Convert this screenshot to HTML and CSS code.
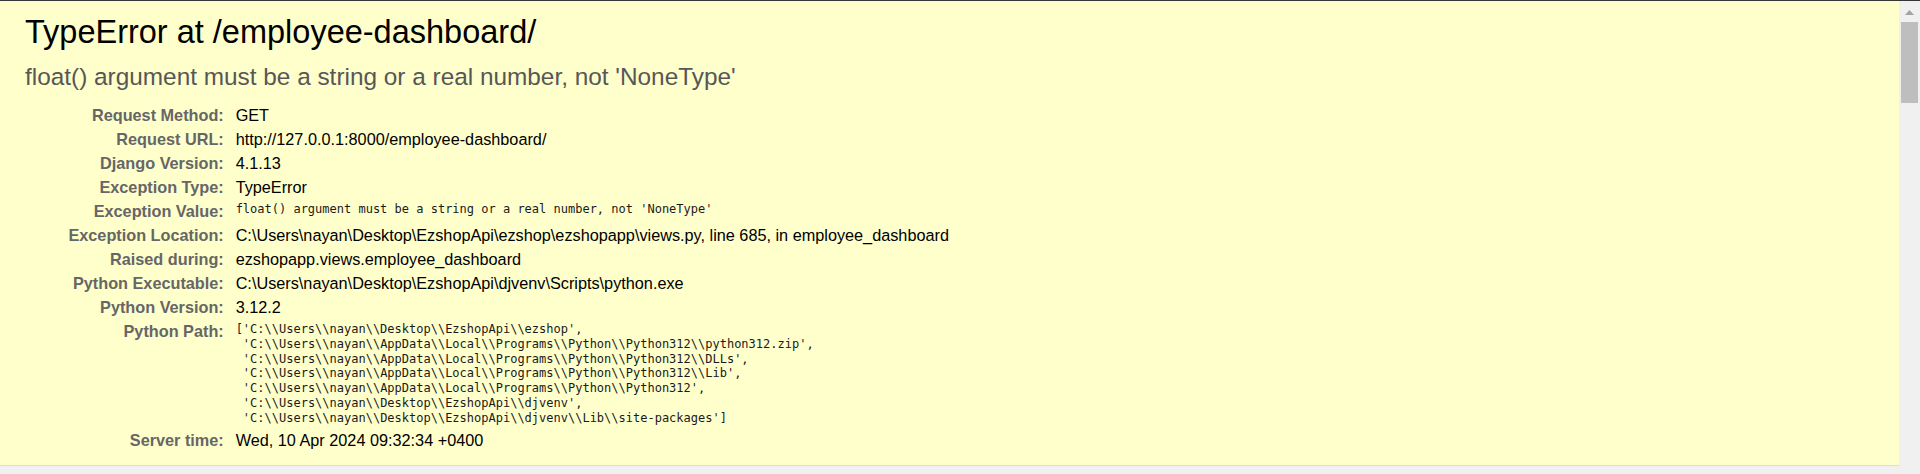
FILE: index.html
```html
<!DOCTYPE html>
<html lang="en">
<head>
<meta charset="utf-8">
<title>TypeError at /employee-dashboard/</title>
<link rel="stylesheet" href="styles.css">
</head>
<body>
<div class="window">
  <div class="page">
    <div id="summary">
      <h1>TypeError at /employee-dashboard/</h1>
      <pre class="exception_value">float() argument must be a string or a real number, not 'NoneType'</pre>
      <table class="meta">
        <tr><th>Request Method:</th><td>GET</td></tr>
        <tr><th>Request URL:</th><td>http://127.0.0.1:8000/employee-dashboard/</td></tr>
        <tr><th>Django Version:</th><td>4.1.13</td></tr>
        <tr><th>Exception Type:</th><td>TypeError</td></tr>
        <tr><th>Exception Value:</th><td><pre>float() argument must be a string or a real number, not 'NoneType'</pre></td></tr>
        <tr><th>Exception Location:</th><td><span class="fname">C:\Users\nayan\Desktop\EzshopApi\ezshop\ezshopapp\views.py</span>, line 685, in employee_dashboard</td></tr>
        <tr><th>Raised during:</th><td>ezshopapp.views.employee_dashboard</td></tr>
        <tr><th>Python Executable:</th><td>C:\Users\nayan\Desktop\EzshopApi\djvenv\Scripts\python.exe</td></tr>
        <tr><th>Python Version:</th><td>3.12.2</td></tr>
        <tr><th>Python Path:</th><td><pre>['C:\\Users\\nayan\\Desktop\\EzshopApi\\ezshop',
 'C:\\Users\\nayan\\AppData\\Local\\Programs\\Python\\Python312\\python312.zip',
 'C:\\Users\\nayan\\AppData\\Local\\Programs\\Python\\Python312\\DLLs',
 'C:\\Users\\nayan\\AppData\\Local\\Programs\\Python\\Python312\\Lib',
 'C:\\Users\\nayan\\AppData\\Local\\Programs\\Python\\Python312',
 'C:\\Users\\nayan\\Desktop\\EzshopApi\\djvenv',
 'C:\\Users\\nayan\\Desktop\\EzshopApi\\djvenv\\Lib\\site-packages']</pre></td></tr>
        <tr><th>Server time:</th><td>Wed, 10 Apr 2024 09:32:34 +0400</td></tr>
      </table>
    </div>
  </div>
  <div class="scrollbar">
    <svg class="arrow" width="9" height="5" viewBox="0 0 9 5"><polygon points="4.5,0 9,5 0,5" fill="#a3a3a3"/></svg>
    <div class="thumb"></div>
  </div>
</div>
</body>
</html>
```

FILE: styles.css
```css
* { margin: 0; padding: 0; box-sizing: content-box; }
html, body { height: 100%; overflow: hidden; }
body {
  font-family: "Liberation Sans", Arial, sans-serif;
  font-size: 16.25px;
  color: #000;
  background: #f0f0f0;
}
.window {
  display: flex;
  height: 473px;
  border-top: 1px solid #363636;
}
.page {
  flex: 1;
  min-width: 0;
  background: #f0f0f0;
}
#summary {
  background: #ffffcc;
  padding: 12.5px 25px;
  border-bottom: 1px solid #dddddd;
}
h1 {
  font-weight: normal;
  font-size: 32.5px;
  color: #000;
}
pre {
  font-family: "DejaVu Sans Mono", "Liberation Mono", monospace;
  font-size: 12px;
  line-height: 14.8px;
  white-space: pre-wrap;
  word-break: break-word;
  color: #1a1a1a;
}
pre.exception_value {
  font-family: "Liberation Sans", Arial, sans-serif;
  color: #575757;
  font-size: 24.375px;
  line-height: normal;
  margin: 12.5px 0;
}
table.meta {
  border: none;
  border-collapse: collapse;
  width: 100%;
  background: transparent;
}
table.meta th,
table.meta td {
  vertical-align: top;
  padding: 2.5px 3.75px;
}
table.meta th {
  width: 195px;
  text-align: right;
  color: #666;
  font-weight: bold;
  padding-right: 8.125px;
}
table.meta td { color: #000; }
.scrollbar {
  width: 21px;
  flex: none;
  background: #f0f0f0;
  display: flex;
  flex-direction: column;
  align-items: center;
  padding-top: 9px;
}
.arrow { display: block; }
.thumb {
  margin-top: 7px;
  width: 17px;
  height: 81px;
  background: #bebebe;
}
```
